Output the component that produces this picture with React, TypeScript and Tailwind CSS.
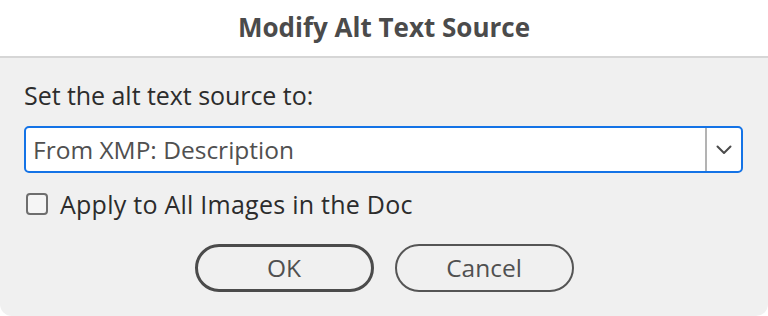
import React from "react";

export default function App() {
  return (
    <div className="w-[768px] h-[316px] bg-white" style={{ fontFamily: "'Open Sans', sans-serif" }}>
      <div className="w-full h-full flex flex-col rounded-b-[12px] overflow-hidden bg-[#f0f0f0]">
        <div className="h-[58px] pb-[3px] bg-white border-b-2 border-[#d6d6d6] flex items-center justify-center shrink-0">
          <span className="text-[26px] leading-[30px] font-bold text-[#4b4b4b]">
            Modify Alt Text Source
          </span>
        </div>
        <div className="flex flex-col px-[24px] pt-[22px]">
          <div className="text-[25px] leading-[30px] text-[#2c2c2c] tracking-[-0.05px]">Set the alt text source to:</div>
          <div className="mt-[16px] h-[47px] w-[719px] border-2 border-[#1473e6] rounded-[5px] bg-white flex items-center">
            <span className="flex-1 pl-[7px] text-[24.5px] leading-[30px] text-[#505050]">From XMP: Description</span>
            <div className="w-[2px] h-full bg-[#b3b3b3]" />
            <div className="w-[34px] flex items-center justify-center">
              <svg width="16" height="10" viewBox="0 0 16 10" fill="none">
                <path d="M1.5 1.5 L8 8 L14.5 1.5" stroke="#4b4b4b" strokeWidth="2" strokeLinecap="round" strokeLinejoin="round" />
              </svg>
            </div>
          </div>
          <div className="mt-[16px] h-[30px] flex items-center">
            <div className="ml-[2px] w-[22px] h-[22px] border-2 border-[#6e6e6e] rounded-[4px] bg-[#f5f5f5]" />
            <span className="ml-[12px] text-[25px] leading-[30px] text-[#2c2c2c] tracking-[0.25px]">Apply to All Images in the Doc</span>
          </div>
          <div className="mt-[25px] flex justify-center gap-[21px]">
            <button className="w-[179px] h-[48px] rounded-full border-[3px] border-[#4b4b4b] text-[24.5px] leading-[30px] text-[#505050] flex items-center justify-center">
              OK
            </button>
            <button className="w-[179px] h-[48px] rounded-full border-2 border-[#555] text-[24.5px] leading-[30px] text-[#505050] flex items-center justify-center">
              Cancel
            </button>
          </div>
        </div>
      </div>
    </div>
  );
}
